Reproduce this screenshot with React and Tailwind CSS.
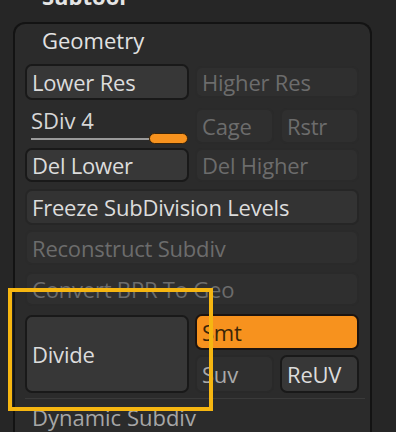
import React from "react";

const font = { fontFamily: '"Open Sans", "Noto Sans", sans-serif' };

function Btn({ children, kind = "on", className = "" }) {
  const styles =
    kind === "on"
      ? "bg-[#373737] border-[#191919] text-[#dcdcdc]"
      : kind === "flat"
      ? "bg-[#333333] border-[#262626] text-[#dcdcdc]"
      : kind === "orange"
      ? "bg-[#f7921e] border-[#1c1410] text-[#3b2608]"
      : kind === "dim"
      ? "bg-[#2f2f2f] border-[#292929] text-[#a9a9a9]"
      : "bg-[#2f2f2f] border-[#2a2a2a] text-[#6c6c6c]";
  return (
    <div
      className={`flex items-center border-2 rounded-[7px] pl-[5px] text-[22px] leading-[30px] tracking-[-0.2px] whitespace-nowrap overflow-hidden ${styles} ${className}`}
    >
      {children}
    </div>
  );
}

export default function App() {
  return (
    <div
      className="relative w-[396px] h-[432px] overflow-hidden bg-[#262626]"
      style={font}
    >
      <div className="h-[22px] overflow-hidden pl-[42px]">
        <div className="-mt-[19px] text-[22px] leading-[30px] font-bold text-[#e4e4e4]">
          Subtool
        </div>
      </div>
      <div className="ml-[13px] w-[359px] h-[420px] border-2 border-b-0 border-[#131313] rounded-t-[12px] bg-[#2b2b2b] pl-[10px] pr-[11px]">
        <div className="h-[40px] pl-[17px] pt-[1px] text-[22px] leading-[30px] text-[#e2e2e2]">
          Geometry
        </div>
        <div className="grid grid-cols-2 gap-[6px] h-[36px]">
          <Btn kind="on">Lower Res</Btn>
          <Btn kind="off" className="my-[2px]">Higher Res</Btn>
        </div>
        <div className="grid grid-cols-2 gap-[6px] h-[32px] mt-[8px]">
          <div className="flex flex-col pl-[6px]">
            <div className="text-[22px] leading-[24px] text-[#d6d6d6]">SDiv 4</div>
            <div className="flex items-center mt-[1px]">
              <div className="w-[118px] h-[2px] bg-[#9a9a9a]" />
              <div className="w-[39px] h-[11px] rounded-full bg-[#f7921e] border border-[#3a2408]" />
            </div>
          </div>
          <div className="grid grid-cols-2 gap-[6px]">
            <Btn kind="off">Cage</Btn>
            <Btn kind="off">Rstr</Btn>
          </div>
        </div>
        <div className="grid grid-cols-2 gap-[6px] h-[34px] mt-[8px]">
          <Btn kind="on">Del Lower</Btn>
          <Btn kind="off">Del Higher</Btn>
        </div>
        <Btn kind="flat" className="h-[36px] mt-[7px]">Freeze SubDivision Levels</Btn>
        <Btn kind="off" className="h-[35px] mt-[5px]">Reconstruct Subdiv</Btn>
        <Btn kind="off" className="h-[34px] mt-[7px]">Convert BPR To Geo</Btn>
        <div className="grid grid-cols-2 gap-[6px] h-[80px] mt-[8px]">
          <Btn kind="on" className="my-[1px]">Divide</Btn>
          <div className="flex flex-col gap-[5px]">
            <Btn kind="orange" className="h-[36px]">Smt</Btn>
            <div className="grid grid-cols-2 gap-[6px] h-[38px]">
              <Btn kind="dim">Suv</Btn>
              <Btn kind="on" className="text-[#c8c8c8]">ReUV</Btn>
            </div>
          </div>
        </div>
        <div className="h-[1px] bg-[#3a3a3a] mt-[4px] mr-[-6px]" />
        <div className="pl-[7px] pt-[3px] text-[22px] leading-[30px] text-[#a6a6a6]">
          Dynamic Subdiv
        </div>
      </div>
      <div className="absolute left-[8px] top-[288px] w-[205px] h-[123px] border-4 border-[#f6b611]" />
    </div>
  );
}
